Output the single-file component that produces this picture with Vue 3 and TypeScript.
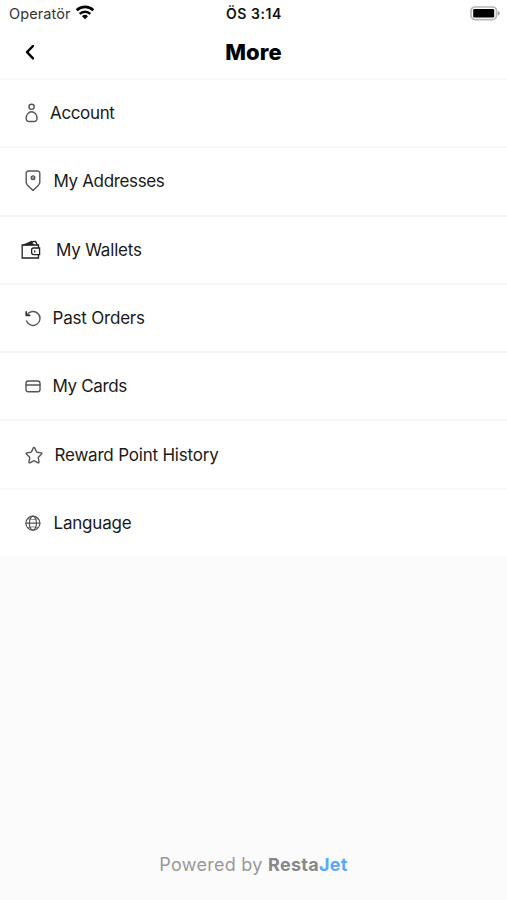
<script setup lang="ts">
type IconName = 'account' | 'pin' | 'wallet' | 'history' | 'card' | 'star' | 'globe'

interface MenuItem {
  icon: IconName
  label: string
}

const items: MenuItem[] = [
  { icon: 'account', label: 'Account' },
  { icon: 'pin', label: 'My Addresses' },
  { icon: 'wallet', label: 'My Wallets' },
  { icon: 'history', label: 'Past Orders' },
  { icon: 'card', label: 'My Cards' },
  { icon: 'star', label: 'Reward Point History' },
  { icon: 'globe', label: 'Language' },
]
</script>

<template>
  <div class="screen">
    <div class="status">
      <div class="carrier">
        <span>Operatör</span>
        <svg class="wifi" width="20" height="15" viewBox="0 0 20 15" fill="none" stroke="#000">
          <path d="M1.7 5.3a12 12 0 0 1 16.6 0" stroke-width="2.7" />
          <path d="M4.7 8.8a7.6 7.6 0 0 1 10.6 0" stroke-width="2.5" />
          <path d="M10 14.3 7 11.3a4.3 4.3 0 0 1 6 0Z" fill="#000" stroke="none" />
        </svg>
      </div>
      <div class="clock">ÖS 3:14</div>
      <svg class="battery" width="32" height="16" viewBox="0 0 32 16">
        <rect x="2" y="1" width="25.5" height="12.6" rx="4" fill="#fff" stroke="#b8b8b8" stroke-width="1.7" />
        <rect x="4.2" y="3" width="21" height="8.6" rx="1.3" fill="#000" />
        <path d="M28.8 4.9c2.6 1.2 2.6 3.6 0 4.8Z" fill="#a0a0a0" />
      </svg>
    </div>

    <header class="header">
      <svg class="back" width="16" height="20" viewBox="0 0 16 20" fill="none" stroke="#000" stroke-width="2.4" stroke-linecap="round" stroke-linejoin="round">
        <path d="M11 4 5 10.2 11 16.4" />
      </svg>
      <h1>More</h1>
    </header>

    <nav class="menu">
      <a v-for="item in items" :key="item.icon" class="row" :class="item.icon">
        <svg class="icon" width="24" height="24" viewBox="0 0 24 24" fill="none" stroke="#555" stroke-width="1.4" stroke-linecap="round" stroke-linejoin="round">
          <template v-if="item.icon === 'account'">
            <circle cx="11.6" cy="5.8" r="2.6" />
            <path d="M11.6 10.8c-2.9 0-5.4 2.8-5.4 6.400 0 2.200 1.200 3.300 3.200 3.300h4.400c2 0 3.200-1.100 3.200-3.300 0-3.600-2.500-6.400-5.400-6.400Z" />
          </template>
          <template v-else-if="item.icon === 'pin'">
            <path d="M8.4 2h9.200a2.200 2.200 0 0 1 2.200 2.200v8.900c0 1.100-.4 2-1.100 2.800L13 21.500l-5.700-5.600a4 4 0 0 1-1.100-2.800V4.200A2.200 2.200 0 0 1 8.400 2Z" />
            <circle cx="13" cy="8.700" r="1.800" fill="#aaa" />
          </template>
          <template v-else-if="item.icon === 'wallet'">
            <g stroke="#222" stroke-width="1.300" stroke-linejoin="miter">
              <path d="M18.500 9.700V7H2.200v13h16.300v-3.200" />
              <path d="M3 6.900 11.800 3l1.600 3.700Z" fill="#222" stroke-width=".6" />
              <path d="M12 3.600l3.600-.2L17.300 7" />
              <path d="M19.600 10h-5.900a2.100 2.100 0 0 0-2.100 2.100v2.500a2.100 2.100 0 0 0 2.100 2.100h5.900Z" />
              <path d="M14.700 12.800v1.300" />
            </g>
          </template>
          <template v-else-if="item.icon === 'history'">
            <path d="M7 8.900A7 7 0 1 1 6.500 15" />
            <path d="M6.200 5.900v3.500h3.600" stroke="#333" stroke-width="1.600" />
          </template>
          <template v-else-if="item.icon === 'card'">
            <rect x="6" y="7" width="14" height="10.700" rx="2.300" />
            <path d="M6 11h14" />
          </template>
          <template v-else-if="item.icon === 'star'">
            <path d="M13.300 4.900q.7-1 1.400 0l1.800 3.900q.2.400.700.500l4.100.6q.9.300.3 1.100l-3 3q-.4.400-.3.900l.7 4.300q0 1-.9.600l-3.700-2q-.4-.2-.8 0l-3.700 2q-.9.400-.9-.6l.7-4.300q.1-.5-.3-.9l-3-3q-.6-.8.3-1.100l4.100-.6q.5-.1.700-.5Z" />
          </template>
          <template v-else>
            <g stroke-width="1.200">
              <circle cx="12.900" cy="12.200" r="7" />
              <ellipse cx="12.900" cy="12.200" rx="3.500" ry="7" />
              <path d="M5.900 12.200h14" />
              <path d="M8 7.800q4.900 1.700 9.800 0M8 16.600q4.900-1.700 9.800 0" stroke-width=".7" />
            </g>
          </template>
        </svg>
        <span class="label">{{ item.label }}</span>
      </a>
    </nav>

    <footer class="footer">Powered by <strong>Resta<em>Jet</em></strong></footer>
  </div>
</template>

<style>
body {
  margin: 0;
  background: #fbfbfb;
}
</style>

<style scoped>
.screen {
  box-sizing: border-box;
  display: flex;
  flex-direction: column;
  width: 507px;
  height: 900px;
  background: #fbfbfb;
  color: #1a1a1a;
  font-family: Inter, "Liberation Sans", sans-serif;
}
.status {
  display: grid;
  grid-template-columns: 1fr auto 1fr;
  align-items: center;
  height: 27px;
  padding: 0 6px 0 9px;
  background: #fff;
  font-size: 14.5px;
}
.carrier {
  display: flex;
  align-items: center;
  gap: 4px;
  color: #333;
  letter-spacing: 0.1px;
}
.wifi {
  margin-top: -2px;
}
.clock {
  margin-left: -2px;
  color: #111;
  font-size: 14px;
  font-weight: 600;
  letter-spacing: 0.55px;
}
.battery {
  justify-self: end;
}
.header {
  display: grid;
  grid-template-columns: 1fr auto 1fr;
  align-items: center;
  height: 49px;
  padding: 0 22px 2px;
  background: #fff;
}
h1 {
  margin: 0;
  color: #000;
  font-size: 22px;
  font-weight: 800;
  line-height: 28px;
  letter-spacing: 0.1px;
}
.menu {
  display: grid;
  grid-template-rows: repeat(7, 1fr);
  height: 478px;
  background: #fff;
}
.row {
  display: flex;
  align-items: center;
  gap: 9.5px;
  padding-left: 20px;
  border-top: 2px solid #f7f7f7;
}
.label {
  font-size: 17px;
  line-height: 24px;
  letter-spacing: -0.2px;
  white-space: nowrap;
}
.account {
  gap: 6px;
}
.account .label,
.pin .label {
  letter-spacing: -0.35px;
}
.wallet {
  gap: 12px;
}
.history,
.card {
  gap: 8.5px;
}
.card .label {
  letter-spacing: -0.35px;
}
.star {
  gap: 10.5px;
}
.footer {
  margin-top: auto;
  padding-bottom: 23px;
  color: #999;
  font-size: 18px;
  line-height: 24px;
  letter-spacing: 0.28px;
  text-align: center;
}
strong {
  color: #888;
  font-weight: 700;
}
em {
  color: #58a9f8;
  font-style: normal;
}
</style>
